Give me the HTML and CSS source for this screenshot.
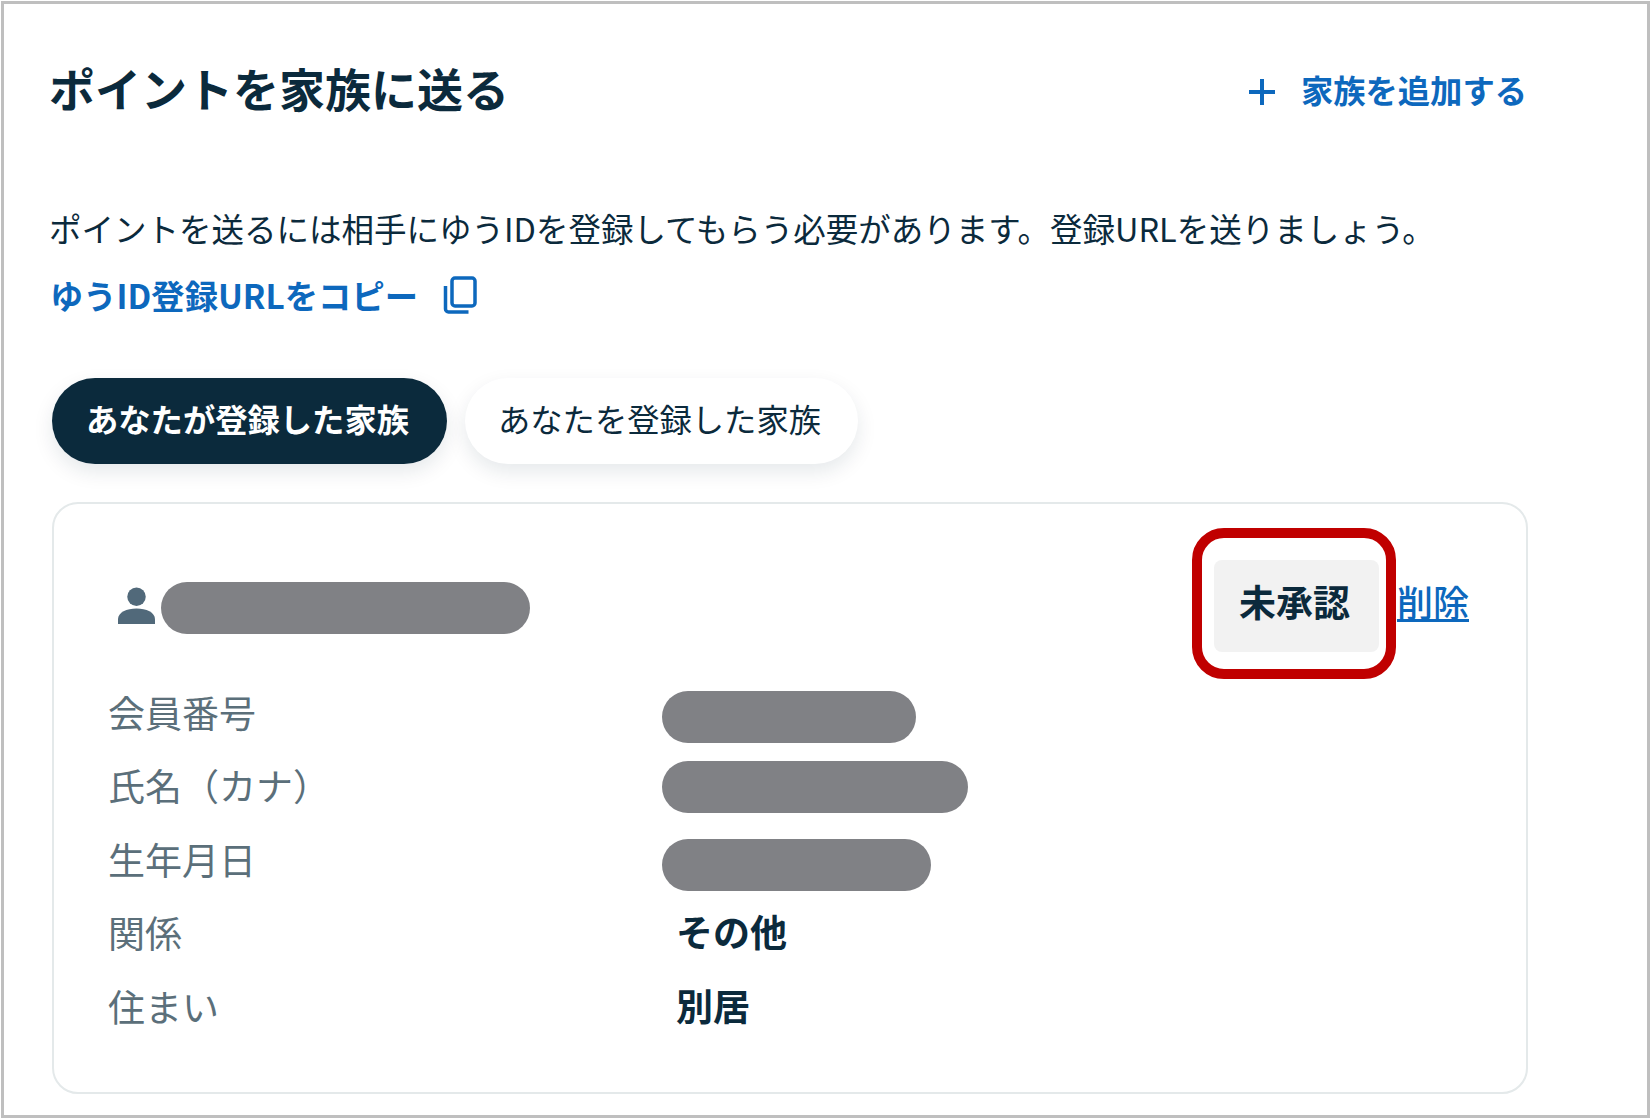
FILE: index.html
```html
<!DOCTYPE html>
<html lang="ja">
<head>
  <meta charset="UTF-8">
  <title>ポイントを家族に送る</title>
  <link rel="stylesheet" href="styles.css">
</head>
<body>
  <div class="frame">
    <div class="head">
      <h1>ポイントを家族に送る</h1>
      <a class="add-link" href="#">
        <svg class="plus" viewBox="0 0 28 28"><path d="M14 1v26M1 14h26" fill="none" stroke="#0d68bd" stroke-width="4"/></svg>
        家族を追加する
      </a>
    </div>

    <p class="lead">ポイントを送るには相手にゆうIDを登録してもらう必要があります。登録URLを送りましょう。</p>
    <a class="copy-link" href="#">
      ゆうID登録URLをコピー
      <svg class="copy" viewBox="0 0 34 38"><path d="M2.5 10v23a3 3 0 0 0 3 3h20" fill="none" stroke="#0d68bd" stroke-width="3.5"/><rect x="9" y="2" width="23" height="28" rx="3" fill="none" stroke="#0d68bd" stroke-width="3.5"/></svg>
    </a>

    <div class="tabs">
      <div class="tab active">あなたが登録した家族</div>
      <div class="tab">あなたを登録した家族</div>
    </div>

    <div class="card">
      <div class="card-top">
        <svg class="person" viewBox="0 0 38 38"><circle cx="19" cy="10" r="9.5" fill="#51697a"/><path d="M0 38v-5c0-7 9-11 19-11s19 4 19 11v5z" fill="#51697a"/></svg>
        <span class="mask mask-name"></span>
        <div class="badge">未承認<span class="callout"></span></div>
        <a class="del" href="#">削除</a>
      </div>
      <div class="rows">
        <div class="label">会員番号</div><div class="value"><span class="mask mask-no"></span></div>
        <div class="label">氏名（カナ）</div><div class="value"><span class="mask mask-kana"></span></div>
        <div class="label">生年月日</div><div class="value"><span class="mask mask-birth"></span></div>
        <div class="label">関係</div><div class="value text">その他</div>
        <div class="label">住まい</div><div class="value text">別居</div>
      </div>
    </div>
  </div>
</body>
</html>
```

FILE: styles.css
```css
* {
  box-sizing: border-box;
}

body {
  margin: 0;
  background: #fff;
  font-family: "Noto Sans CJK JP", "Noto Sans", sans-serif;
  color: #0b2a3c;
}

.frame {
  height: 1117px;
  margin: 1px 1px 0 1px;
  border: 3px solid #bfbfbf;
  padding: 52px 0 0 48px;
}

.head {
  display: flex;
  justify-content: space-between;
  align-items: center;
  width: 1475px;
  height: 64px;
}

h1 {
  margin: -3px 0 0 -3px;
  font-size: 46px;
  font-weight: 700;
  line-height: 64px;
}

a {
  color: #0d68bd;
  text-decoration: none;
}

.add-link {
  display: flex;
  align-items: center;
  gap: 25px;
  font-size: 32.3px;
  font-weight: 700;
  margin-top: 2px;
}

.plus {
  width: 28px;
  height: 28px;
  margin-top: 6px;
}

.lead {
  margin: 86px 0 0 -3px;
  font-size: 32.5px;
  line-height: 44px;
  white-space: nowrap;
}

.copy-link {
  display: flex;
  align-items: center;
  gap: 27px;
  margin: 22px 0 0 -2px;
  height: 44px;
  font-size: 33.3px;
  font-weight: 700;
}

.copy {
  width: 34px;
  height: 38px;
  margin: 2px 0 0 -2px;
}

.tabs {
  display: flex;
  gap: 18px;
  margin-top: 62px;
}

.tab {
  display: flex;
  align-items: center;
  justify-content: center;
  width: 393px;
  height: 86px;
  padding: 0 4px 6px 0;
  border-radius: 43px;
  background: #fff;
  font-size: 32.3px;
  box-shadow: 0 8px 20px rgba(11, 42, 60, 0.1);
}

.tab.active {
  width: 395px;
  background: #0b2a3c;
  color: #fff;
  font-weight: 700;
}

.card {
  width: 1476px;
  height: 592px;
  margin-top: 38px;
  border: 2px solid #e4e9ea;
  border-radius: 26px;
  padding: 56px 57px 0 54px;
}

.card-top {
  display: flex;
  align-items: flex-start;
}

.person {
  width: 37px;
  height: 37px;
  margin: 27px 6px 0 10px;
}

.mask {
  display: block;
  height: 52px;
  border-radius: 26px;
  background: #808185;
}

.mask-name {
  width: 369px;
  margin-top: 22px;
}

.mask-no {
  position: relative;
  top: 5px;
  width: 254px;
}

.mask-kana {
  position: relative;
  top: 2px;
  width: 306px;
}

.mask-birth {
  position: relative;
  top: 6px;
  width: 269px;
}

.badge {
  position: relative;
  display: flex;
  align-items: center;
  justify-content: center;
  width: 165px;
  height: 92px;
  padding: 0 4px 10px 0;
  margin-left: auto;
  border-radius: 8px;
  background: #f2f2f2;
  font-size: 37px;
  font-weight: 700;
}

.callout {
  position: absolute;
  top: -32px;
  left: -22px;
  width: 204px;
  height: 151px;
  border: 10px solid #c00000;
  border-radius: 32px;
}

.del {
  margin: 16px 0 0 18px;
  font-size: 36px;
  font-weight: 500;
  line-height: 50px;
  text-decoration: underline;
}

.rows {
  display: grid;
  grid-template-columns: 554px 1fr;
  grid-auto-rows: 73.5px;
  align-items: center;
  margin-top: 23px;
}

.label {
  font-size: 37px;
  color: #5b6f7a;
}

.value.text {
  padding-left: 14px;
  font-size: 37px;
  font-weight: 700;
  line-height: 50px;
  margin-top: -2px;
}
```
